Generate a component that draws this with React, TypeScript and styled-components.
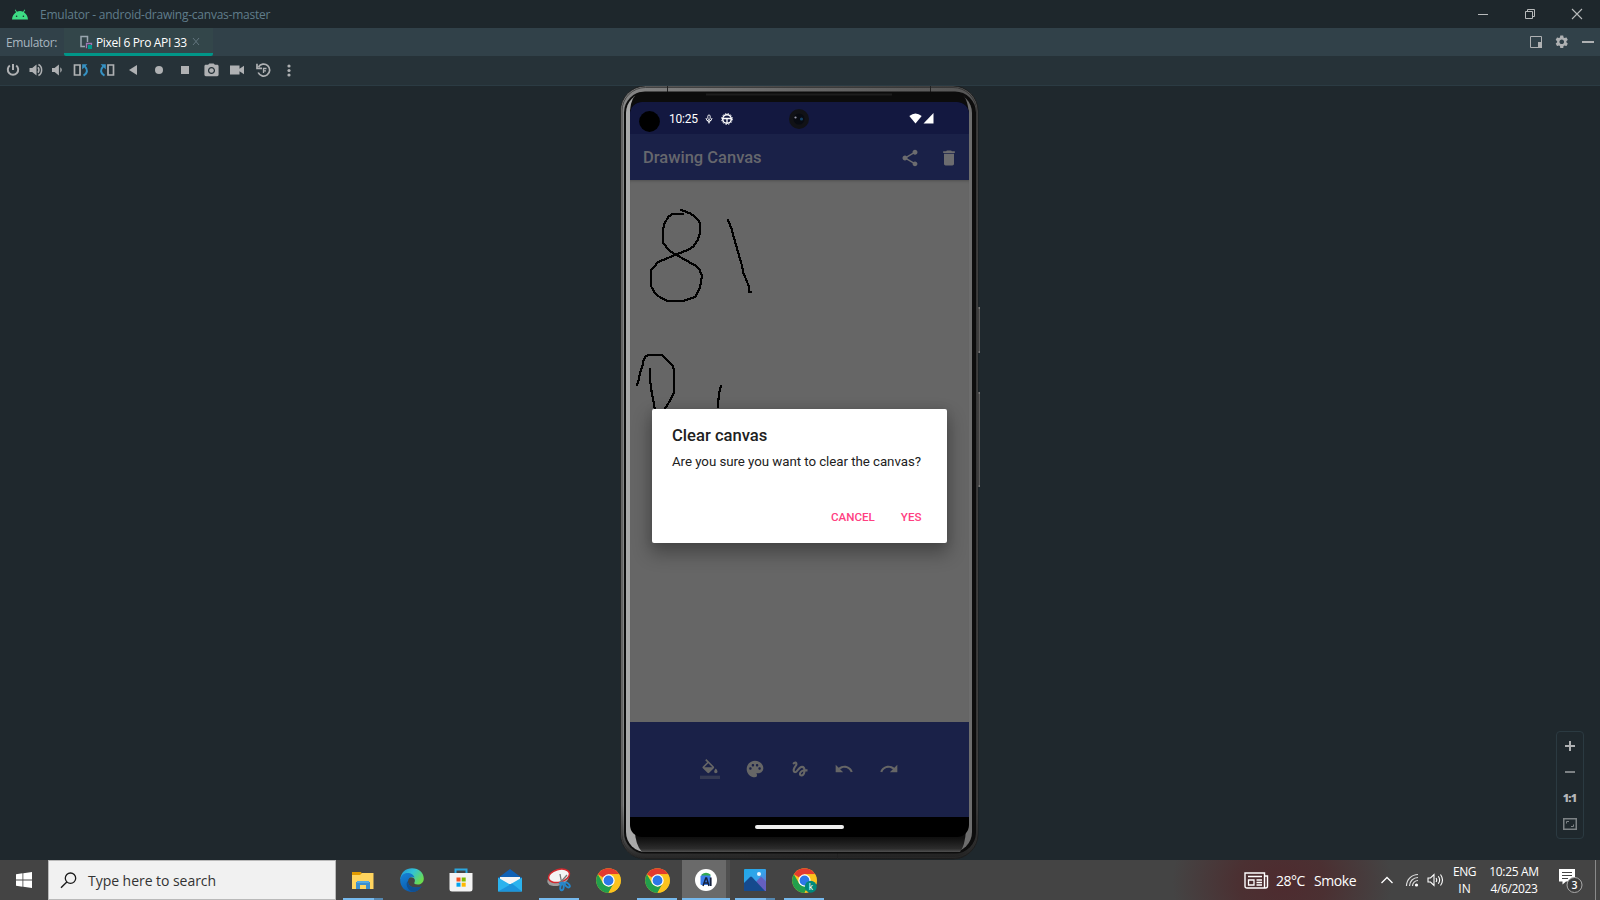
import React from "react";
import styled, { createGlobalStyle } from "styled-components";
import { MdShare, MdDelete, MdPalette, MdGesture, MdUndo, MdRedo, MdSettings, MdPhotoCamera } from "react-icons/md";

const GlobalStyle = createGlobalStyle`
  * { box-sizing: border-box; }
  body { margin: 0; overflow: hidden; background: #1f282d; }
  svg { display: block; flex: none; }
`;

const ui = `"Open Sans", "Noto Sans", sans-serif`;
const device = `Roboto, sans-serif`;

const Window = styled.div`
  width: 1600px;
  height: 900px;
  display: flex;
  flex-direction: column;
  background: #1f282d;
  font-family: ${ui};
  font-size: 12px;
`;

const Label = styled.span<{ $size?: number; $track?: number; $color?: string; $weight?: number; $family?: string }>`
  white-space: nowrap;
  font-size: ${(p) => p.$size ?? 12}px;
  letter-spacing: ${(p) => p.$track ?? 0}px;
  color: ${(p) => p.$color ?? "#fff"};
  font-weight: ${(p) => p.$weight ?? 400};
  font-family: ${(p) => p.$family ?? ui};
`;

const TitleBar = styled.header`
  height: 28px;
  flex: none;
  display: flex;
  align-items: center;
  padding: 0 17px 0 12px;
  gap: 12px;
  background: #1e272c;
`;
const WindowButtons = styled.div`
  margin-left: auto;
  display: flex;
  gap: 35px;
`;
const TabBar = styled.div`
  height: 28px;
  flex: none;
  display: flex;
  align-items: center;
  padding: 0 6px;
  background: #314149;
`;
const Tab = styled.div`
  height: 28px;
  width: 149px;
  margin-left: 7px;
  padding-left: 15px;
  display: flex;
  align-items: center;
  gap: 3px;
  background: #33464a;
  border-bottom: 3px solid #009688;
  border-radius: 0 0 2px 2px;
  padding-top: 3px;
`;
const TabTools = styled.div`
  margin-left: auto;
  display: flex;
  align-items: center;
  gap: 12.5px;
`;
const Toolbar = styled.div`
  height: 30px;
  flex: none;
  display: flex;
  background: #263238;
  border-bottom: 1px solid #2b3b43;
`;
const Tool = styled.div<{ $w: number }>`
  width: ${(p) => p.$w}px;
  height: 28px;
  display: flex;
  align-items: center;
  justify-content: center;
  color: #afb1b3;
`;
const Workspace = styled.main`
  height: 774px;
  flex: none;
  position: relative;
  display: flex;
  justify-content: center;
`;

const Phone = styled.div`
  position: relative;
  width: 362px;
  height: 774px;
  padding: 16px 12px 23px 11px;
`;
const Bezel = styled.svg`
  position: absolute;
  left: 0;
  top: 0;
`;
const Screen = styled.div`
  position: relative;
  width: 339px;
  height: 735px;
  display: flex;
  flex-direction: column;
  overflow: hidden;
  border-radius: 12px;
  background: #000;
  font-family: ${device};
`;
const StatusBar = styled.div`
  height: 32px;
  flex: none;
  display: flex;
  align-items: center;
  padding: 1px 35px 0 39px;
  background: #131840;
`;
const StatusEnd = styled.div`
  margin-left: auto;
  margin-bottom: 1px;
  display: flex;
  gap: 1px;
`;
const Lens = styled.svg<{ $x: number; $y: number }>`
  position: absolute;
  left: ${(p) => p.$x}px;
  top: ${(p) => p.$y}px;
`;
const AppBar = styled.div`
  height: 46px;
  flex: none;
  display: flex;
  align-items: center;
  padding: 1px 10px 0 13px;
  background: #1a2148;
  color: #6c6c6f;
`;
const AppActions = styled.div`
  margin-left: auto;
  display: flex;
  gap: 19.5px;
`;
const Canvas = styled.div`
  height: 542px;
  flex: none;
  background: #666;
  box-shadow: inset 0 3px 3px -2px #505050;
`;
const BrushBar = styled.div`
  height: 95px;
  flex: none;
  display: flex;
  align-items: center;
  justify-content: center;
  gap: 24.8px;
  padding-bottom: 1px;
  color: #666;
  background: #1a2148;
`;
const NavBar = styled.div`
  height: 20px;
  display: flex;
  align-items: center;
  justify-content: center;
`;
const Pill = styled.div`
  width: 89px;
  height: 4px;
  border-radius: 2px;
  background: #eee;
`;
const Dialog = styled.section`
  position: absolute;
  left: 22px;
  top: 306.5px;
  width: 295px;
  height: 134px;
  display: flex;
  flex-direction: column;
  padding: 16.5px 25.5px 15px 20px;
  border-radius: 2px;
  background: #fff;
  box-shadow: 0 9px 18px 2px rgba(0, 0, 0, 0.3), 0 0 10px rgba(0, 0, 0, 0.1);
`;
const DialogTitle = styled.h2`
  margin: 0;
  font: 500 16.6px/22px ${device};
  color: #212121;
`;
const DialogText = styled.p`
  margin: 4px 0 0;
  white-space: nowrap;
  font: 400 13.3px/22px ${device};
  letter-spacing: -0.05px;
  color: #212121;
`;
const DialogActions = styled.div`
  display: flex;
  justify-content: flex-end;
  gap: 26px;
  margin-top: 36px;
  font: 500 11.6px/16px ${device};
  color: #ff4081;
`;

const ZoomPanel = styled.div`
  position: absolute;
  left: 1556px;
  top: 645px;
  width: 28px;
  height: 108px;
  display: flex;
  flex-direction: column;
  align-items: center;
  padding-top: 1px;
  border: 1px solid #2b3a41;
  border-radius: 4px;
`;
const ZoomCell = styled.div`
  height: 26px;
  display: flex;
  align-items: center;
  justify-content: center;
`;
const ZoomRatio = styled(Label)`
  padding: 0 1px 2px 0;
`;

const Taskbar = styled.footer`
  height: 40px;
  flex: none;
  display: flex;
  background: radial-gradient(ellipse 110px 90px at 1282px 22px, #4e2b2f 0%, #4b3032 40%, rgba(68, 68, 68, 0) 100%), #444;
`;
const StartButton = styled.div`
  width: 48px;
  display: flex;
  align-items: center;
  justify-content: center;
`;
const SearchBox = styled.div`
  width: 288px;
  display: flex;
  align-items: center;
  gap: 11px;
  padding-left: 11px;
  background: #f1f1f1;
  border: 1px solid #b9b9b9;
`;
const AppList = styled.div`
  display: flex;
  margin-left: 2.5px;
`;
const AppSlot = styled.div<{ $open?: boolean; $active?: boolean; $stack?: boolean }>`
  position: relative;
  width: 49px;
  display: flex;
  align-items: center;
  justify-content: center;
  background: ${(p) => (p.$active ? "linear-gradient(90deg, #6a6a6a 44px, #505050 44px 48px, transparent 48px)" : "none")};
  &::after {
    content: "";
    position: absolute;
    bottom: 0;
    left: ${(p) => (p.$active ? 0 : 4.5)}px;
    width: ${(p) => (p.$active ? 48 : 40)}px;
    height: ${(p) => (p.$open ? 2 : 0)}px;
    background: ${(p) => (p.$stack ? "linear-gradient(90deg, #76b9ed 78%, #5487b0 78%)" : "#76b9ed")};
  }
`;
const Tray = styled.div`
  margin-left: auto;
  width: 356px;
  display: flex;
  align-items: center;
  color: #fff;
`;
const TrayItem = styled.div<{ $w: number; $end?: boolean }>`
  width: ${(p) => p.$w}px;
  display: flex;
  align-items: center;
  justify-content: ${(p) => (p.$end ? "flex-start" : "center")};
`;
const TwoLines = styled.div<{ $w: number }>`
  width: ${(p) => p.$w}px;
  display: flex;
  flex-direction: column;
  align-items: center;
  line-height: 17px;
  padding-bottom: 1px;
`;
const ShowDesktop = styled.div`
  width: 5px;
  height: 40px;
  border-left: 1px solid #8a8a8a;
`;

const Android = () => (
  <svg width="16" height="11" viewBox="0 0 16 11">
    <path d="M0 10.5C.2 6.900 2.100 4.400 4.100 3.200L2.800 1l.7-.5 1.400 2.200a8 8 0 0 1 6.200 0L12.500.5l.7.5-1.300 2.200c2 1.200 3.900 3.700 4.100 7.300z" fill="#3ddc84" />
    <circle cx="4.600" cy="7.300" r=".8" fill="#1e272c" /><circle cx="11.400" cy="7.300" r=".8" fill="#1e272c" />
  </svg>
);

const Rotate = ({ flip = false }: { flip?: boolean }) => (
  <svg width="16" height="14" viewBox="0 0 16 14">
    <g transform={flip ? "translate(16 0) scale(-1 1)" : undefined}>
      <path d="M1.500 2h5.500v10H1.500z" fill="none" stroke="#afb1b3" strokeWidth="1.700" />
      <path d="M10.500 12.600c4.200-2.300 4.500-6.300 1.400-9.200" fill="none" stroke="#3592c4" strokeWidth="2" />
      <path d="M9.200 1.200h5.200L9.200 6.400z" fill="#3592c4" />
    </g>
  </svg>
);

const Speaker = ({ loud = false }: { loud?: boolean }) => (
  <svg width="14" height="14" viewBox="0 0 14 14">
    <path d={loud ? "M.5 5h2.700L7.500 1.500v11L3.200 9H.5z" : "M2 5h2.600l4.300-3.500v11L4.600 9H2z"} fill="#afb1b3" />
    {loud ? <path d="M9 4.200q2 2.800 0 5.600M9.400 1.500c4.300 2 4.300 9 0 11" fill="none" stroke="#afb1b3" strokeWidth="1.500" />
      : <path d="M10.300 4.300q3 2.700 0 5.400z" fill="#afb1b3" />}
  </svg>
);

const PhoneBody = () => (
  <Bezel width="362" height="774" viewBox="619 86 362 774">
    <defs>
      <linearGradient id="rim" x1="0" x2="1"><stop offset="0" stopColor="#858585" /><stop offset=".5" stopColor="#686868" /><stop offset="1" stopColor="#555" /></linearGradient>
      <linearGradient id="glass" x1="0" x2="1"><stop offset="0" stopColor="#a9a9a9" /><stop offset=".5" stopColor="#a0a0a0" /><stop offset=".6" stopColor="#6d6d6d" /><stop offset="1" stopColor="#6d6d6d" /></linearGradient>
      <linearGradient id="low" x1="0" y1="0" x2="0" y2="1"><stop offset="0" stopColor="#050505" /><stop offset=".4" stopColor="#121212" /><stop offset=".85" stopColor="#2c2c2c" /><stop offset="1" stopColor="#505050" /></linearGradient>
      <linearGradient id="vert" x1="0" y1="0" x2="0" y2="1"><stop offset=".93" stopColor="#161616" stopOpacity="0" /><stop offset="1" stopColor="#161616" stopOpacity=".85" /></linearGradient>
    </defs>
    <path d="M978 307h2v46h-2zM978 392h2v95h-2z" fill="#777" />
    <path d="M979 309v42M979 394v91" stroke="#222" strokeWidth=".7" />
    <rect x="620.500" y="86" width="357.500" height="773" rx="25" fill="url(#rim)" />
    <rect x="620.500" y="86" width="357.500" height="773" rx="25" fill="url(#vert)" stroke="#191919" strokeWidth=".8" />
    <rect x="622" y="87.500" width="354.500" height="770" rx="23.500" fill="none" stroke="#292929" strokeWidth="1" opacity=".7" />
    <path d="M667.500 86v6M930.500 86v6M837.500 853v6" stroke="#222" />
    <rect x="624" y="91.500" width="352" height="762" rx="21" fill="#0d0d0d" />
    <rect x="626" y="93" width="346" height="759" rx="20" fill="url(#glass)" />
    <path d="M639 92.500h319q9 2 10.500 18l-.5 6H630v-6q1-14 9-18z" fill="#0c0c0c" />
    <path d="M706 94.500h186" stroke="#1d1d1d" strokeWidth="2" />
    <path d="M635 830h331q-1 16-6 22H642q-7-8-7-22z" fill="url(#low)" />
  </Bezel>
);

const Sketch = () => (
  <svg width="339" height="542" viewBox="630 180 339 542">
    <g transform="translate(610 190) scale(.33333)" fill="none" stroke="#000" strokeWidth="6.500" strokeLinejoin="round" shapeRendering="crispEdges">
      <path d="M211 59L243 71L267 92L271 104V125L263 150L250 170L235 179L197 194L145 216L123 240V288L132 305L146 319L172 333H218L257 320L270 292L276 258L268 238L258 228L214 203L197 194L176 180L159 158V120L164 100L174 82L187 71H221" />
      <path d="M353 87L364 115L380 172L396 227L400 248L417 290V306H425" />
      <path d="M81 587l5-18 4-20 7-19 3-17 7-14 10-4h40l30 30 5 14v68l-8 18-12 20-10 15M120 534v36l5 36 6 32 4 24M333 585l-6 28-4 42" />
    </g>
  </svg>
);

const Bucket = () => (
  <svg width="20" height="20" viewBox="0 0 24 24" fill="#666">
    <path d="M16.560 8.940L7.620 0 6.210 1.410l2.380 2.380-5.150 5.150a1.490 1.490 0 0 0 0 2.120l5.500 5.500c.29.29.68.44 1.060.44s.77-.15 1.060-.44l5.500-5.500c.59-.58.59-1.530 0-2.120zM5.210 10L10 5.210 14.790 10H5.210zM19 11.500s-2 2.170-2 3.500c0 1.100.9 2 2 2s2-.9 2-2c0-1.330-2-3.500-2-3.500z" />
    <path d="M0 20h24v4H0z" opacity=".36" />
  </svg>
);

const Chrome = ({ badge = false }: { badge?: boolean }) => (
  <svg width="25" height="25" viewBox="0 0 24 24">
    <circle cx="12" cy="12" r="11.800" fill="#fcc31e" />
    <path d="M1.780 6.100A11.800 11.800 0 0 1 22.220 6.100H12L6.900 9.050z" fill="#e33b2e" />
    <path d="M1.780 6.100L6.890 14.950 12 17.900 12 23.800A11.800 11.800 0 0 1 1.780 6.100z" fill="#229f4c" />
    <path d="M6.890 14.950A5.900 5.900 0 0 0 17.100 14.950L12 23.800 8 22z" fill="#229f4c" />
    <path d="M22.220 6.100H12l5.100 8.850L12 23.800A11.800 11.800 0 0 0 22.220 6.100z" fill="#fcc31e" />
    <circle cx="12" cy="12" r="5.900" fill="#fff" /><circle cx="12" cy="12" r="4.700" fill="#2c78e8" />
    {badge && <><circle cx="18" cy="18" r="5.700" fill="#00897b" /><text x="18" y="20.800" fontSize="8" textAnchor="middle" fill="#fff" fontFamily="Roboto">k</text></>}
  </svg>
);

const Explorer = () => (
  <svg width="22" height="19" viewBox="0 0 22 19">
    <path d="M0 1h9l1 2h11v5H0z" fill="#e19a00" /><path d="M0 4h8l2-2h11.500v16H0z" fill="#ffd45e" />
    <path d="M4 18v-7h14v7h-4v-4H8v4z" fill="#3c8fce" /><path d="M5 10h12v2H5z" fill="#53a9e3" />
  </svg>
);
const Edge = () => (
  <svg width="24" height="24" viewBox="0 0 24 24">
    <defs>
      <linearGradient id="eg" x1="0" x2="1" y2=".6"><stop offset="0" stopColor="#1d91d8" /><stop offset=".5" stopColor="#32c3d5" /><stop offset="1" stopColor="#6bdc4e" /></linearGradient>
      <linearGradient id="eb" x2=".6" y2="1"><stop offset="0" stopColor="#1683d8" /><stop offset="1" stopColor="#0b58a8" /></linearGradient>
    </defs>
    <path d="M.3 11C1 4 6 .2 12 .2 19 .2 23.800 5 23.800 10.500c0 4-3 6-6 6-2.800 0-4-1-3.400-2 1.200-2 .5-5.300-3.400-5.300C6 9.200 3 12 .3 11z" fill="url(#eg)" />
    <path d="M.2 12C.5 7.500 4 5 7.500 5c3.500 0 6.300 2 7 4.400C11 7.500 8 10 8 13.500c0 5 5.500 7.500 13.500 5C19.500 22 16 24 12 24 5.500 24 0 19 .2 12z" fill="url(#eb)" />
    <path d="M8 13c-.3 5.500 5.500 8 13.500 5.500-2 3.500-5.500 5.300-8 5.300C7 23 5 15 8 13z" fill="#104f91" />
  </svg>
);
const Store = () => (
  <svg width="24" height="24" viewBox="0 0 24 24">
    <path d="M6.500 6V1.500h11V6" fill="none" stroke="#2ba7e0" strokeWidth="2" />
    <path d="M.5 5h23v16a2.500 2.500 0 0 1-2.500 2.500H3A2.500 2.500 0 0 1 .5 21z" fill="#f3f3f3" />
    <path d="M7.500 9.500h4v4h-4z" fill="#f25022" /><path d="M12.700 9.500h4v4h-4z" fill="#7fba00" /><path d="M7.500 14.700h4v4h-4z" fill="#00a4ef" /><path d="M12.700 14.700h4v4h-4z" fill="#ffb900" />
  </svg>
);
const Mail = () => (
  <svg width="24" height="23" viewBox="0 0 24 23">
    <path d="M0 9L12 0l12 9v4H0z" fill="#0f61b5" /><path d="M2 8h20v7H2z" fill="#f5f5f5" />
    <path d="M0 8.500l12 7 12-7V22.500H0z" fill="#2bb3ee" /><path d="M0 22.500l14-8 10 8z" fill="#1c94dc" />
  </svg>
);
const Snip = () => (
  <svg width="24" height="24" viewBox="0 0 24 24">
    <ellipse cx="11" cy="11" rx="11" ry="6.500" transform="rotate(-18 11 11)" fill="#9d9d9d" />
    <ellipse cx="12" cy="7.800" rx="10.700" ry="6.300" transform="rotate(-16 12 7.800)" fill="#f4f4f4" stroke="#d3282d" strokeWidth="1.500" />
    <path d="M13 6l2 11M20 7l-8 9" stroke="#777" strokeWidth="1.300" />
    <g fill="none" stroke="#2587cc" strokeWidth="1.900"><ellipse cx="15" cy="19.300" rx="1.700" ry="3" transform="rotate(10 15 19.300)" /><ellipse cx="20.300" cy="17" rx="1.700" ry="3" transform="rotate(-45 20.300 17)" /><path d="M12 15.500l5-1" /></g>
  </svg>
);
const Studio = () => (
  <svg width="22" height="22" viewBox="0 0 22 22">
    <circle cx="11" cy="11" r="11" fill="#fff" />
    <path d="M6.500 7V5.500q4.500-3.500 9 0V7z" fill="#32a852" /><rect x="5.500" y="6.500" width="10" height="9.500" rx="1" fill="#3d7fe8" />
    <path d="M8 17l2.800-8h.8l2.400 8M9.300 14h3.800" stroke="#14203c" strokeWidth="1.500" fill="none" /><path d="M15.700 8.500V17" stroke="#14203c" strokeWidth="1.800" />
  </svg>
);
const Photos = () => (
  <svg width="22" height="22" viewBox="0 0 22 22">
    <defs><linearGradient id="ph" x2="1" y2="1"><stop offset="0" stopColor="#1fa8e8" /><stop offset=".5" stopColor="#35a3ea" /><stop offset="1" stopColor="#7b62c5" /></linearGradient></defs>
    <rect width="22" height="22" rx="1" fill="url(#ph)" /><circle cx="15" cy="5" r="2" fill="#eaf6ff" />
    <path d="M11 14l6-6.500 5 5V22H11z" fill="#655fc0" /><path d="M0 14l6-6q1-1 2 0l13 14H0z" fill="#154a8e" />
  </svg>
);

export default function App() {
  return (
    <>
      <GlobalStyle />
      <Window>
        <TitleBar>
          <Android />
          <Label $color="#607d8b" $track={-0.23}>Emulator - android-drawing-canvas-master</Label>
          <WindowButtons>
            <svg width="12" height="12" viewBox="0 0 12 12"><path d="M1 6.500h10" stroke="#b8babb" /></svg>
            <svg width="12" height="12" viewBox="0 0 12 12"><path d="M1.500 3.500h7v7h-7zM3.500 3.500v-2h7v7h-2" fill="none" stroke="#b8babb" /></svg>
            <svg width="12" height="12" viewBox="0 0 12 12"><path d="M1 1l10 10M11 1L1 11" stroke="#b8babb" strokeWidth="1.100" /></svg>
          </WindowButtons>
        </TitleBar>
        <TabBar>
          <Label $color="#a9b7c0" $track={-0.38}>Emulator:</Label>
          <Tab>
            <svg width="14" height="14" viewBox="0 0 14 14">
              <path d="M6 11.500H2V1.500h6.500V7" fill="none" stroke="#9aa7b0" strokeWidth="1.500" />
              <path d="M8 12.500h-.5V8.500h5V10" stroke="#9f79b5" strokeWidth="1.300" fill="none" /><path d="M9 10h4v4H9z" fill="#009688" />
            </svg>
            <Label $track={-0.33}>Pixel 6 Pro API 33</Label>
            <svg width="10" height="10" viewBox="0 0 10 10"><path d="M3 1l6 7M9 1L3 8" stroke="#62757e" /></svg>
          </Tab>
          <TabTools>
            <svg width="13" height="13" viewBox="0 0 13 13"><path d="M1.500.5h11v11h-11z" fill="none" stroke="#afb1b3" /><path d="M9 6h4v6H9z" fill="#afb1b3" /></svg>
            <MdSettings size={15.5} color="#afb1b3" />
            <svg width="12" height="12" viewBox="0 0 12 12"><path d="M0 6h12" stroke="#afb1b3" strokeWidth="2" /></svg>
          </TabTools>
        </TabBar>
        <Toolbar>
          <Tool $w={26}><svg width="14" height="14" viewBox="0 0 14 14"><path d="M3.800 2.500a5.200 5.200 0 1 0 6.400 0M7 1v6" fill="none" stroke="#afb1b3" strokeWidth="2" /></svg></Tool>
          <Tool $w={19}><Speaker loud /></Tool>
          <Tool $w={24}><Speaker /></Tool>
          <Tool $w={24}><Rotate /></Tool>
          <Tool $w={28}><Rotate flip /></Tool>
          <Tool $w={24}><svg width="8" height="10" viewBox="0 0 8 10"><path d="M0 5l8-5v10z" fill="#afb1b3" /></svg></Tool>
          <Tool $w={28}><svg width="8" height="8" viewBox="0 0 8 8"><circle cx="4" cy="4" r="4" fill="#afb1b3" /></svg></Tool>
          <Tool $w={24}><svg width="8" height="8" viewBox="0 0 8 8"><path d="M0 0h8v8H0z" fill="#afb1b3" /></svg></Tool>
          <Tool $w={28}><MdPhotoCamera size={17} /></Tool>
          <Tool $w={24}><svg width="14" height="10" viewBox="0 0 14 10"><path d="M0 .5h9.500v3.300L14 .8v8.400L9.500 6.200v3.300H0z" fill="#afb1b3" /></svg></Tool>
          <Tool $w={28}><svg width="15" height="14" viewBox="0 0 15 14"><path d="M2.500 4a6 6 0 1 1-.3 5.500M1 .8v4.500h5" fill="none" stroke="#afb1b3" strokeWidth="1.700" /><path d="M7.500 10V5.500h3M7.500 7.800h2.500" stroke="#afb1b3" strokeWidth="1.300" fill="none" /></svg></Tool>
          <Tool $w={24}><svg width="4" height="13" viewBox="0 0 4 13" fill="#afb1b3"><circle cx="2" cy="2" r="1.600" /><circle cx="2" cy="6.500" r="1.600" /><circle cx="2" cy="11" r="1.600" /></svg></Tool>
        </Toolbar>
        <Workspace>
          <Phone>
            <PhoneBody />
            <Screen>
              <StatusBar>
                <Label $size={12} $family={device} $track={-0.2}>10:25</Label>
                <svg width="15" height="10" viewBox="-7 0 15 10"><rect x="2.800" y="1" width="2.400" height="4.500" rx="1.200" fill="none" stroke="#fff" strokeWidth=".9" /><path d="M1 4q0 3 3 3t3-3M4 7v2.500M2 6l2 2.500L6 6" fill="none" stroke="#fff" strokeWidth=".9" /></svg>
                <svg width="20" height="12" viewBox="-8 0 20 12"><circle cx="6" cy="6" r="4.300" fill="none" stroke="#fff" strokeWidth="1.500" /><circle cx="6" cy="6" r="5.400" fill="none" stroke="#fff" strokeWidth="1" strokeDasharray="1.400 1.430" /><path d="M2 5.500h8M6 5v5" stroke="#fff" strokeWidth="1.300" /></svg>
                <StatusEnd>
                  <svg width="13" height="11" viewBox="0 0 13 11"><path d="M.3 3Q6.500-2 12.700 3L6.500 10.500z" fill="#fff" /></svg>
                  <svg width="11" height="11" viewBox="0 0 11 11"><path d="M10.500 0v10.500H.5z" fill="#fff" /></svg>
                </StatusEnd>
              </StatusBar>
              <AppBar>
                <Label $size={16.5} $weight={500} $color="#66676d" $family={device}>Drawing Canvas</Label>
                <AppActions><MdShare size={20} /><MdDelete size={20} /></AppActions>
              </AppBar>
              <Canvas><Sketch /></Canvas>
              <BrushBar><Bucket /><MdPalette size={20} /><MdGesture size={20} /><MdUndo size={20} /><MdRedo size={20} /></BrushBar>
              <NavBar><Pill /></NavBar>
              <Lens $x={9} $y={9} width="21" height="21" viewBox="0 0 21 21"><circle cx="10.500" cy="10.500" r="10.400" /></Lens>
              <Lens $x={159} $y={7} width="20" height="20" viewBox="0 0 20 20"><circle cx="10" cy="10" r="10" fill="#111216" /><circle cx="10" cy="10" r="5.500" fill="#080b12" /><circle cx="6.500" cy="8.500" r="1.100" fill="#99a" /><circle cx="12.500" cy="10" r="1.600" fill="#154064" /></Lens>
              <Dialog>
                <DialogTitle>Clear canvas</DialogTitle>
                <DialogText>Are you sure you want to clear the canvas?</DialogText>
                <DialogActions><span>CANCEL</span><span>YES</span></DialogActions>
              </Dialog>
            </Screen>
          </Phone>
          <ZoomPanel>
            <ZoomCell><svg width="10" height="10" viewBox="0 0 10 10"><path d="M5 0v10M0 5h10" stroke="#afb1b3" strokeWidth="2" /></svg></ZoomCell>
            <ZoomCell><svg width="10" height="2" viewBox="0 0 10 2"><path d="M0 1h10" stroke="#7d8285" strokeWidth="2" /></svg></ZoomCell>
            <ZoomCell><ZoomRatio $size={11} $weight={800} $color="#b5b7b9" $track={-0.8}>1:1</ZoomRatio></ZoomCell>
            <ZoomCell><svg width="14" height="12" viewBox="0 0 14 12"><path d="M.75.75h12.500v10.500H.75z" fill="none" stroke="#7d8285" strokeWidth="1.500" /><path d="M3.500 5.500v-2h2.500M10.500 6.500v2H8" fill="none" stroke="#7d8285" /></svg></ZoomCell>
          </ZoomPanel>
        </Workspace>
        <Taskbar>
          <StartButton><svg width="16" height="16" viewBox="0 0 16 16" fill="#fff"><path d="M0 2.200l6.500-.9v6.300H0zM7.300 1.200L16 0v7.600H7.300zM0 8.400h6.500v6.300L0 13.800zM7.300 8.400H16V16l-8.700-1.200z" /></svg></StartButton>
          <SearchBox>
            <svg width="17" height="17" viewBox="0 0 17 17"><circle cx="10.500" cy="6.200" r="5.200" fill="none" stroke="#1b1b1b" strokeWidth="1.300" /><path d="M6.800 10L1 15.800" stroke="#1b1b1b" strokeWidth="1.400" /></svg>
            <Label $size={14} $color="#333" $track={-0.04}>Type here to search</Label>
          </SearchBox>
          <AppList>
            <AppSlot $open $stack><Explorer /></AppSlot>
            <AppSlot><Edge /></AppSlot>
            <AppSlot><Store /></AppSlot>
            <AppSlot><Mail /></AppSlot>
            <AppSlot $open><Snip /></AppSlot>
            <AppSlot><Chrome /></AppSlot>
            <AppSlot $open><Chrome /></AppSlot>
            <AppSlot $open $active><Studio /></AppSlot>
            <AppSlot $open $stack><Photos /></AppSlot>
            <AppSlot $open><Chrome badge /></AppSlot>
          </AppList>
          <Tray>
            <TrayItem $w={32} $end><svg width="25" height="17" viewBox="0 0 25 17"><path d="M1 1h19.500v15H3Q1 16 1 14zM20.500 4H23.500v10q0 2-2 2h-2" fill="none" stroke="#fff" strokeWidth="1.400" /><path d="M4 4.500h14M12.500 8H18M12.500 10.500H18M12.500 13H18M4.500 8h5.500v5H4.500z" fill="none" stroke="#fff" strokeWidth="1.300" /></svg></TrayItem>
            <TrayItem $w={38} $end><Label $size={14} $track={-0.5}>28°C</Label></TrayItem>
            <TrayItem $w={60} $end><Label $size={14} $track={-0.4}>Smoke</Label></TrayItem>
            <TrayItem $w={26}><svg width="12" height="8" viewBox="0 0 12 8"><path d="M.5 7L6 1.500 11.500 7" fill="none" stroke="#fff" strokeWidth="1.300" /></svg></TrayItem>
            <TrayItem $w={24}><svg width="14" height="14" viewBox="0 0 14 14"><path d="M1.500 13A11.500 11.500 0 0 1 13 1.500M4.500 13A8.500 8.500 0 0 1 13 4.500M7.500 13A5.500 5.500 0 0 1 13 7.500" fill="none" stroke="#ddd" strokeWidth="1.200" /><circle cx="11.500" cy="12" r="1.600" fill="#fff" /></svg></TrayItem>
            <TrayItem $w={23}><svg width="17" height="14" viewBox="0 0 17 14"><path d="M1 5h2.500L7 1.500v11L3.500 9H1zM9 5q1.500 2 0 4M11.300 3.300q2.700 3.700 0 7.400M13.500 1.500q4 5.500 0 11" fill="none" stroke="#fff" strokeWidth="1.100" /></svg></TrayItem>
            <TwoLines $w={35}><Label $track={-0.4}>ENG</Label><Label>IN</Label></TwoLines>
            <TwoLines $w={64}><Label $track={-0.35}>10:25 AM</Label><Label $track={-0.35}>4/6/2023</Label></TwoLines>
            <TrayItem $w={49}>
              <svg width="26" height="26" viewBox="0 -2 26 26"><path d="M1 0h16v12.500H8L4.500 15.500v-3H1z" fill="#fff" /><path d="M4 3.500h10M4 6.500h10M4 9.500h6" stroke="#444" /><circle cx="16.500" cy="16" r="7.500" fill="#3c3c3c" stroke="#aaa" /><text x="16.500" y="19.800" fill="#fff" fontSize="10.500" fontWeight="600" textAnchor="middle" fontFamily="Open Sans">3</text></svg>
            </TrayItem>
            <ShowDesktop />
          </Tray>
        </Taskbar>
      </Window>
    </>
  );
}
